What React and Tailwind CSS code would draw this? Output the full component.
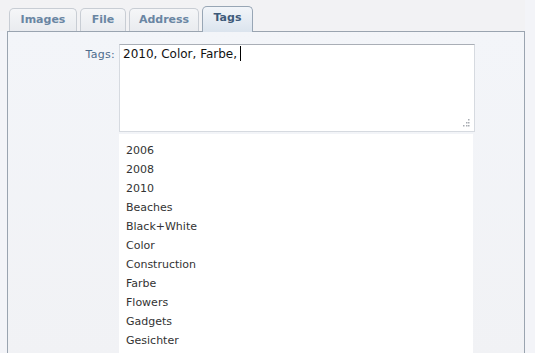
import React from 'react';

const tags = ['2006', '2008', '2010', 'Beaches', 'Black+White', 'Color', 'Construction', 'Farbe', 'Flowers', 'Gadgets', 'Gesichter'];

const tabs = [
    { label: 'Images', w: 'w-[68px]' },
    { label: 'File', w: 'w-[46px]' },
    { label: 'Address', w: 'w-[70px]' },
];

function Tab({ label, w }) {
    return (
        <div className={`${w} h-[23px] rounded-t-[5px] border border-b-0 border-[#c8cdd4] bg-gradient-to-b from-[#f5f6f8] to-[#e9ebef] flex items-center justify-center text-[11px] font-bold text-[#6a86a3]`}>
            {label}
        </div>
    );
}

function Grip() {
    return (
        <svg width="8" height="8" viewBox="0 0 8 8" className="absolute right-[4px] bottom-[4px]">
            {[[6, 0], [4, 3], [6, 3], [1, 6], [4, 6], [6, 6]].map(([x, y], i) => (
                <rect key={i} x={x} y={y} width="1.5" height="1.5" fill="#a8acb2" />
            ))}
        </svg>
    );
}

export default function App() {
    return (
        <div className="h-[353px] w-[535px] overflow-hidden bg-[#f3f4f8] font-['DejaVu_Sans',sans-serif]">
            <div className="w-[525px] h-[31px] bg-[#f2f2f4] flex items-end pl-[9px] gap-[3px]">
                {tabs.map(t => <Tab key={t.label} {...t} />)}
                <div className="relative z-10 -mb-px w-[51px] h-[26px] rounded-t-[5px] border border-b-0 border-[#98a6b5] bg-gradient-to-b from-[#f2f5f9] to-[#dbe4ee] flex items-center justify-center pb-[2px] text-[11px] font-bold text-[#3e5b7a]">
                    Tags
                </div>
            </div>
            <div className="ml-[7px] w-[518px] h-[330px] border border-b-0 border-[#9aa4b0] bg-gradient-to-b from-[#f3f5f9] to-[#f1f2f5] pt-[12px]">
                <div className="flex items-start">
                    <div className="w-[107px] text-right pt-[3px] text-[11px] text-[#4d6b8c] tracking-[0.3px]">Tags:</div>
                    <div className="ml-[4px]">
                        <div className="relative w-[356px] h-[88px] bg-white border border-[#d6dae0] border-t-[#a9aeb6] pl-[3px] pt-[1px] text-[12px] leading-[16px] text-[#111]">
                            <span>2010, Color, Farbe,</span>
                            <span className="inline-block ml-[3px] w-px h-[15px] bg-black align-[-3px]"></span>
                            <Grip />
                        </div>
                        <div className="mt-[2px] w-[354px] h-[240px] bg-white pt-[7px]">
                            {tags.map(t => (
                                <div key={t} className="h-[19px] leading-[19px] pl-[7px] text-[11px] text-[#333]">{t}</div>
                            ))}
                        </div>
                    </div>
                </div>
            </div>
        </div>
    );
}
